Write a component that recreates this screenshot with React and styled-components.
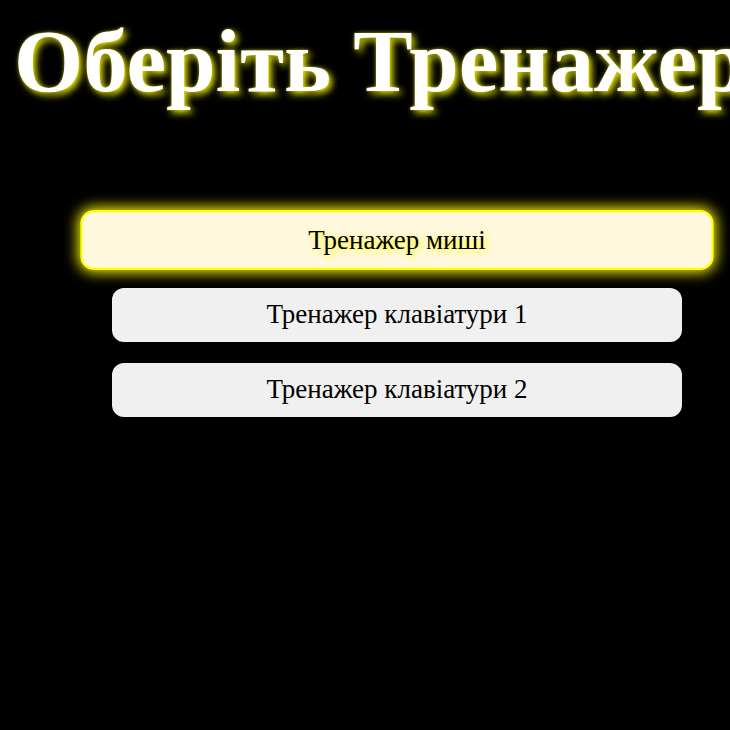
import React from "react";
import styled, { createGlobalStyle, css } from "styled-components";

const Global = createGlobalStyle`
  html, body {
    margin: 0;
    padding: 0;
    background: #000;
    overflow: hidden;
  }
  body {
    font-family: "Liberation Serif", "Times New Roman", serif;
  }
`;

const Page = styled.main`
  width: 730px;
  height: 730px;
  background: #000;
  display: flex;
  flex-direction: column;
  overflow: hidden;
`;

const Title = styled.h1`
  margin: 0;
  padding: 12px 0 0 14px;
  font-size: 89px;
  font-weight: bold;
  line-height: 1.107;
  color: #fff;
  white-space: nowrap;
  text-shadow: 3px 3px 7px #e6e600, 0 0 3px rgba(255, 255, 0, 0.5);
`;

const Menu = styled.nav`
  display: flex;
  flex-direction: column;
  gap: 21px;
  width: 570px;
  margin: 102px 0 0 112px;
`;

const TrainerButton = styled.button`
  height: 54px;
  width: 100%;
  border: none;
  border-radius: 12px;
  background: #f0f0f0;
  color: #000;
  font-family: "Liberation Serif", "Times New Roman", serif;
  font-size: 27px;
  cursor: pointer;
  padding: 0;

  ${(p) =>
    p.$active &&
    css`
      transform: scale(1.111);
      font-size: 24.3px;
      background: #fff8dc;
      border: 2px solid #ffff00;
      box-shadow: 0 0 12px 2px #ffff00;
      text-shadow: 2px 2px 6px #ffff00;
    `}
`;

const items = [
  { label: "Тренажер миші", active: true },
  { label: "Тренажер клавіатури 1" },
  { label: "Тренажер клавіатури 2" },
];

export default function App() {
  return (
    <>
      <Global />
      <Page>
        <Title>Оберіть Тренажер</Title>
        <Menu>
          {items.map((it) => (
            <TrainerButton key={it.label} $active={it.active}>
              {it.label}
            </TrainerButton>
          ))}
        </Menu>
      </Page>
    </>
  );
}
